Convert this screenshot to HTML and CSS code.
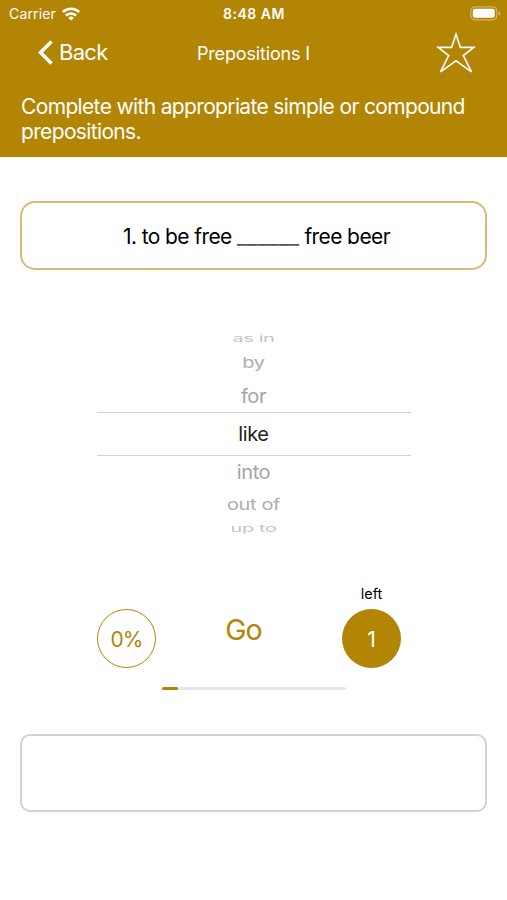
FILE: index.html
```html
<!DOCTYPE html>
<html lang="en">
<head>
    <meta charset="UTF-8">
    <meta name="viewport" content="width=device-width, initial-scale=1.0">
    <title>Prepositions I</title>
    <link rel="stylesheet" href="styles.css">
</head>
<body>
    <header class="header">
        <div class="status-bar">
            <div class="carrier">
                <span>Carrier</span>
                <svg class="wifi" width="18" height="14" viewBox="0 0 18 14" fill="none" stroke="#fff" stroke-width="2.7">
                    <path d="M0.9 5.1a11.5 11.5 0 0 1 16.2 0"/>
                    <path d="M3.9 8.6a7.2 7.2 0 0 1 10.2 0"/>
                    <path d="M9 13.6L6.2 10.9a4 4 0 0 1 5.6 0z" fill="#fff" stroke="none"/>
                </svg>
            </div>
            <span class="time">8:48 AM</span>
            <svg class="battery" width="31" height="15" viewBox="0 0 31 15">
                <rect x="0.8" y="0.8" width="26" height="13" rx="4" fill="none" stroke="#fff" stroke-opacity="0.4" stroke-width="1.2"/>
                <rect x="2.8" y="2.8" width="22" height="9" rx="2.2" fill="#fff"/>
                <path d="M28.7 5.2a2.5 2.5 0 0 1 0 4.6z" fill="#fff" fill-opacity="0.5"/>
            </svg>
        </div>
        <nav class="nav">
            <a class="back">
                <svg width="16" height="25" viewBox="0 0 16 25" fill="none" stroke="#fff" stroke-width="3.5">
                    <path d="M14.5 1.5L3.5 12.5L14.5 23.5"/>
                </svg>
                <span>Back</span>
            </a>
            <h1 class="title">Prepositions I</h1>
            <svg class="star" width="42" height="42" viewBox="0 0 42 42" fill="none" stroke="#fff" stroke-width="1.6">
                <path d="M21 2.2L25.4 15.4H38.9L28.3 23.5L36.5 39.8L21 28.8L5.5 39.8L13.7 23.5L3.1 15.4H16.6Z"/>
            </svg>
        </nav>
        <p class="instructions">Complete with appropriate simple or compound prepositions.</p>
    </header>

    <main class="exercise">
        <div class="question">
            <p>1. to be free <span class="blank">______</span> free beer</p>
        </div>

        <div class="picker">
            <div class="option edge"><span>as in</span></div>
            <div class="option far"><span>by</span></div>
            <div class="option near"><span>for</span></div>
            <div class="option selected"><span>like</span></div>
            <div class="option near"><span>into</span></div>
            <div class="option far"><span>out of</span></div>
            <div class="option edge"><span>up to</span></div>
        </div>

        <div class="controls">
            <div class="circle score">0%</div>
            <div class="go">Go</div>
            <div class="remaining">
                <span class="remaining-label">left</span>
                <div class="circle count">1</div>
            </div>
        </div>

        <div class="progress">
            <div class="progress-bar"></div>
        </div>

        <div class="answer"></div>
    </main>
</body>
</html>
```
FILE: styles.css
```css
* {
    margin: 0;
    padding: 0;
    box-sizing: border-box;
}

body {
    font-family: Inter, 'Liberation Sans', sans-serif;
    background-color: #fff;
    color: #000;
}

.header {
    height: 157px;
    background-color: #b28504;
    color: #fff;
}

.status-bar {
    display: grid;
    grid-template-columns: 1fr auto 1fr;
    align-items: center;
    height: 27px;
    padding: 0 6px 0 9px;
    font-size: 14px;
}

.carrier {
    display: flex;
    align-items: center;
    gap: 6px;
    letter-spacing: 0.15px;
}

.time {
    margin-right: 2px;
    font-weight: 600;
    letter-spacing: 0.5px;
}

.battery {
    justify-self: end;
}

.nav {
    display: grid;
    grid-template-columns: 1fr auto 1fr;
    align-items: center;
    height: 52px;
    padding: 0 30px 0 37px;
}

.back {
    display: flex;
    align-items: center;
    gap: 6px;
    margin-bottom: 2px;
    font-size: 22px;
    letter-spacing: -0.7px;
}

.title {
    margin-right: 7px;
    font-size: 18px;
    font-weight: 400;
    letter-spacing: -0.15px;
}

.star {
    justify-self: end;
}

.instructions {
    padding: 15px 21px 0;
    font-size: 21px;
    letter-spacing: -0.65px;
    line-height: 25px;
}

.exercise {
    padding: 44px 20px 0;
}

.question {
    display: flex;
    align-items: center;
    justify-content: center;
    height: 69px;
    border: 2px solid #d9bb70;
    border-radius: 15px;
    font-size: 21px;
    letter-spacing: -0.6px;
    line-height: 26px;
    padding: 3px 0 0 6px;
}

.blank {
    color: #555;
    font-size: 22.7px;
    letter-spacing: 0;
    line-height: 1;
}

.picker {
    width: 314px;
    margin: 62px auto 0;
}

.option {
    display: flex;
    align-items: center;
    justify-content: center;
    font-size: 20px;
    letter-spacing: -0.4px;
    line-height: 24px;
    color: #a5a5a5;
}

.option.edge {
    height: 14px;
    color: #c4c4c4;
}

.option.edge span {
    transform: scaleY(0.46);
}

.option.far {
    height: 34px;
    color: #adadad;
}

.option.far span {
    transform: scaleY(0.75);
}

.option.near {
    height: 32px;
}

.option.near span {
    transform: scaleY(0.95);
}

.option.selected {
    height: 44px;
    border-top: 1px solid #d2d2d2;
    border-bottom: 1px solid #d2d2d2;
    color: #222;
}

.controls {
    display: flex;
    justify-content: space-between;
    align-items: flex-end;
    width: 304px;
    height: 84px;
    margin: 48px 0 0 77px;
}

.circle {
    display: flex;
    align-items: center;
    justify-content: center;
    width: 59px;
    height: 59px;
    padding-top: 1px;
    border-radius: 50%;
    font-size: 21px;
}

.score {
    border: 1px solid #b28504;
    color: #b28504;
    letter-spacing: -1px;
}

.go {
    align-self: center;
    margin: 6px 11px 0 0;
    color: #b28504;
    font-size: 28.5px;
    letter-spacing: -1px;
}

.remaining {
    display: flex;
    flex-direction: column;
    align-items: center;
    gap: 7px;
}

.remaining-label {
    font-size: 14.5px;
    line-height: 17px;
}

.count {
    background-color: #b28504;
    color: #fff;
}

.progress {
    width: 184px;
    height: 3px;
    margin: 19px auto 0;
    border-radius: 2px;
    background-color: #e6e6e6;
}

.progress-bar {
    width: 9%;
    height: 100%;
    border-radius: 2px;
    background-color: #b28504;
}

.answer {
    height: 78px;
    margin-top: 44px;
    border: 2px solid #d2d2d2;
    border-radius: 10px;
}
```
